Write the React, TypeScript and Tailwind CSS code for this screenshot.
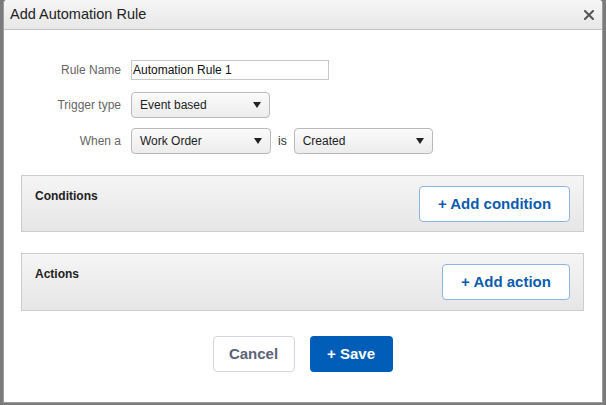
import React from "react";

function Arrow() {
  return (
    <svg width="8" height="6" viewBox="0 0 8 6" className="shrink-0">
      <path d="M0 0 L8 0 L4 6 Z" fill="#222" />
    </svg>
  );
}

function Select({ value, w, h }: { value: string; w: string; h: string }) {
  return (
    <div
      className={`${w} ${h} flex items-center justify-between rounded-[4px] border border-[#b9b9b9] bg-gradient-to-b from-[#fbfbfb] to-[#ececec] pl-[8px] pr-[8px] text-[12px] text-[#222]`}
    >
      <span>{value}</span>
      <Arrow />
    </div>
  );
}

export default function App() {
  return (
    <div
      className="w-[606px] h-[405px] bg-[#7b7b7b] pl-[3px] pr-[3px] pb-[2px] overflow-hidden"
      style={{ fontFamily: '"Liberation Sans", Arial, Helvetica, sans-serif' }}
    >
      <div className="h-[403px] bg-white border border-[#9c9c9c] border-t-0 rounded-t-[4px] flex flex-col overflow-hidden">
        {/* Header */}
        <div className="h-[30px] shrink-0 flex items-center justify-between bg-gradient-to-b from-[#f6f6f6] to-[#e7e7e7] border-b border-[#c4c4c4] pl-[6px] pr-[8px]">
          <span className="text-[14.5px] text-[#222]">Add Automation Rule</span>
          <svg width="10" height="10" viewBox="0 0 10 10">
            <path d="M1 1 L9 9 M9 1 L1 9" stroke="#555" strokeWidth="2" strokeLinecap="square" />
          </svg>
        </div>

        {/* Form */}
        <div className="flex flex-col mt-[30px]">
          <div className="flex items-center h-[20px]">
            <div className="w-[117px] text-right text-[12px] text-[#666] mr-[10px]">Rule Name</div>
            <div className="w-[198px] h-[20px] border border-[#c8c8c8] bg-white flex items-center pl-[1px] text-[12px] text-[#111]">
              Automation Rule 1
            </div>
          </div>
          <div className="flex items-center h-[26px] mt-[12px]">
            <div className="w-[117px] text-right text-[12px] text-[#666] mr-[10px]">Trigger type</div>
            <Select value="Event based" w="w-[139px]" h="h-[26px]" />
          </div>
          <div className="flex items-center h-[26px] mt-[10px]">
            <div className="w-[117px] text-right text-[12px] text-[#666] mr-[10px]">When a</div>
            <Select value="Work Order" w="w-[140px]" h="h-[26px]" />
            <span className="text-[12px] text-[#333] ml-[7px] mr-[7px]">is</span>
            <Select value="Created" w="w-[139px]" h="h-[26px]" />
          </div>
        </div>

        {/* Panels */}
        <div className="flex flex-col ml-[17px] mr-[18px] mt-[21px] gap-[21px]">
          <div className="h-[57px] border border-[#cdcdcd] bg-gradient-to-b from-[#f6f5f6] to-[#e7e6e7] flex items-start justify-between pl-[13px] pr-[13px] pt-[10px]">
            <span className="text-[12px] font-bold text-[#222] mt-[1px]">Conditions</span>
            <button className="w-[151px] h-[36px] rounded-[4px] border border-[#8db6e3] bg-white text-[15px] font-bold text-[#0b5cae] flex items-center justify-center">
              + Add condition
            </button>
          </div>
          <div className="h-[58px] border border-[#cdcdcd] bg-gradient-to-b from-[#f6f5f6] to-[#e7e6e7] flex items-start justify-between pl-[13px] pr-[13px] pt-[10px]">
            <span className="text-[12px] font-bold text-[#222] mt-[1px]">Actions</span>
            <button className="w-[128px] h-[36px] rounded-[4px] border border-[#8db6e3] bg-white text-[15px] font-bold text-[#0b5cae] flex items-center justify-center">
              + Add action
            </button>
          </div>
        </div>

        {/* Footer */}
        <div className="flex justify-center gap-[15px] mt-[25px] pr-[1px]">
          <button className="w-[82px] h-[36px] rounded-[4px] border border-[#d3d6dd] bg-white text-[15px] font-bold text-[#5b6377]">
            Cancel
          </button>
          <button className="w-[83px] h-[36px] rounded-[4px] bg-[#005eb8] text-[15px] font-bold text-white">
            + Save
          </button>
        </div>
      </div>
    </div>
  );
}
